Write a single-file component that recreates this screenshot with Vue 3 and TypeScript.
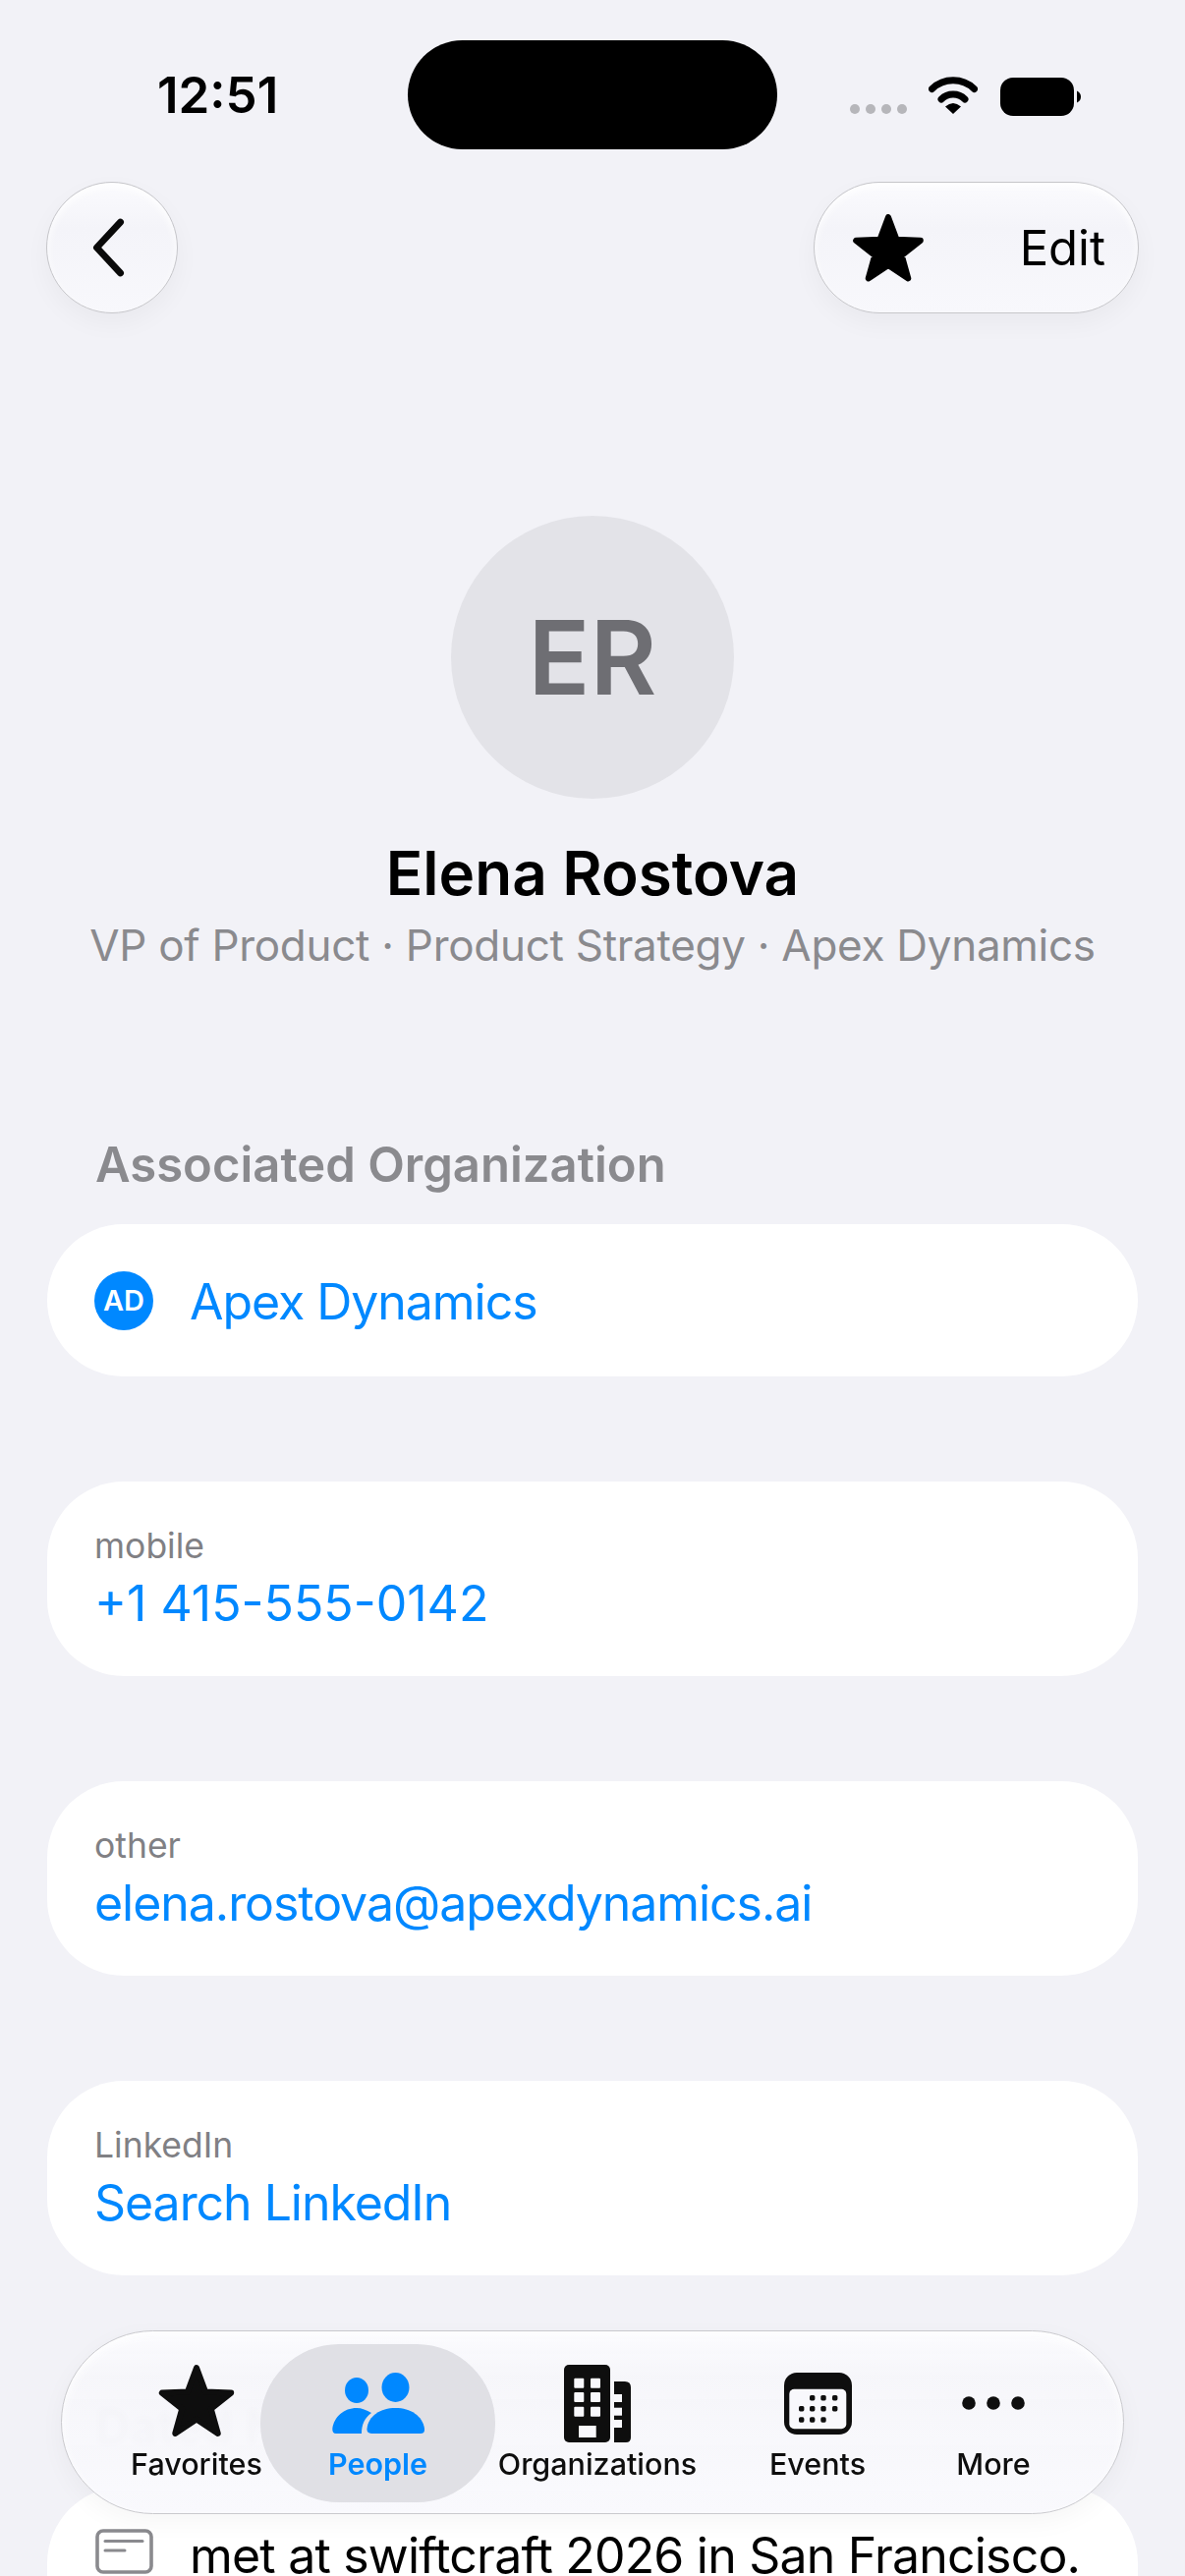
<script setup lang="ts">
interface ContactRow {
  label: string
  value: string
  numeric?: boolean
}

const rows: ContactRow[] = [
  { label: 'mobile', value: '+1 415-555-0142', numeric: true },
  { label: 'other', value: 'elena.rostova@apexdynamics.ai' },
  { label: 'LinkedIn', value: 'Search LinkedIn' },
]

// five-pointed star, stroked with a round join to soften the tips
function starPoints(cx: number, cy: number, outer: number, inner: number): string {
  const pts: string[] = []
  for (let i = 0; i < 10; i++) {
    const r = i % 2 === 0 ? outer : inner
    const a = ((i * 36 - 90) * Math.PI) / 180
    pts.push(`${(cx + r * Math.cos(a)).toFixed(2)},${(cy + r * Math.sin(a)).toFixed(2)}`)
  }
  return pts.join(' ')
}

const windowRows = [13.7, 28, 42.7]
const annexNotches = [30, 43.7, 56]

// calendar dots: [x, y]
const calendarDots: [number, number][] = [
  [28.7, 25.7], [40, 25.7], [51.7, 25.7],
  [17.7, 36.7], [28.7, 36.7], [40, 36.7], [51.7, 36.7],
  [17.7, 48], [28.7, 48], [40, 48],
]
</script>

<template>
  <div class="screen">
    <div class="status">
      <div class="time-slot"><span class="time">12:51</span></div>
      <div class="island"></div>
      <div class="status-icons">
        <svg class="dots" width="58" height="10" viewBox="0 0 58 10">
          <circle v-for="i in 4" :key="i" :cx="5 + (i - 1) * 16" cy="5" r="5" fill="#b6b6ba" />
        </svg>
        <svg class="wifi" width="50" height="38" viewBox="0 0 50 38" fill="none" stroke="#000" stroke-width="7" stroke-linecap="round">
          <path d="M3.5 12.5A31 31 0 0 1 46.5 12.5" />
          <path d="M13 23A17 17 0 0 1 37 23" />
          <path d="M25 38L17 30.5Q25 23.5 33 30.5Z" fill="#000" stroke="none" />
        </svg>
        <svg class="battery" width="82" height="39" viewBox="0 0 82 39">
          <rect width="75" height="39" rx="13" fill="#000" />
          <path d="M78 13.5C81 15 82 17 82 19.5S81 24 78 25.5Z" fill="#000" />
        </svg>
      </div>
    </div>

    <header class="toolbar">
      <button class="glass back">
        <svg width="40" height="64" viewBox="0 0 40 64" fill="none" stroke="#0a0a0a" stroke-width="7.5" stroke-linecap="round" stroke-linejoin="round">
          <path d="M33 4L7 32L33 60" />
        </svg>
      </button>
      <button class="glass edit">
        <svg width="72" height="69" viewBox="0 0 72 69">
          <polygon :points="starPoints(36, 37.5, 34.5, 14.5)" fill="#000" stroke="#000" stroke-width="6" stroke-linejoin="round" />
        </svg>
        <span>Edit</span>
      </button>
    </header>

    <section class="hero">
      <div class="avatar">ER</div>
      <h1 class="name">Elena Rostova</h1>
      <p class="role">VP of Product · Product Strategy · Apex Dynamics</p>
    </section>

    <h2 class="section-title">Associated Organization</h2>
    <div class="card org-card">
      <span class="org-badge">AD</span>
      <span class="link">Apex Dynamics</span>
    </div>

    <div v-for="row in rows" :key="row.label" class="card contact-card">
      <span class="contact-label">{{ row.label }}</span>
      <span class="link" :class="{ numeric: row.numeric }">{{ row.value }}</span>
    </div>

    <h2 class="section-title notes-title">Dated Notes</h2>
    <div class="card note-card">
      <svg class="note-icon" width="59" height="46" viewBox="0 0 59 46" fill="none" stroke="#8a8a8e" stroke-linecap="round">
        <rect x="2" y="2" width="55" height="42" rx="6" stroke-width="3.6" />
        <path d="M10 12.6H48" stroke-width="3" />
        <path d="M10 22H30" stroke-width="3" />
      </svg>
      <span class="note-text">met at swiftcraft 2026 in San Francisco.</span>
    </div>

    <nav class="tabbar">
      <div class="tab">
        <div class="tab-icon">
          <svg width="100" height="80" viewBox="0 0 100 80">
            <polygon :points="starPoints(50, 41, 37, 15.5)" fill="#0e0e0e" stroke="#0e0e0e" stroke-width="6" stroke-linejoin="round" />
          </svg>
        </div>
        <span class="tab-label">Favorites</span>
      </div>

      <div class="tab active">
        <div class="tab-icon">
          <svg width="94" height="62" viewBox="0 0 94 62" fill="#0088ff">
            <ellipse cx="25" cy="18" rx="12" ry="13" />
            <ellipse cx="64.5" cy="15" rx="14" ry="15" />
            <path d="M40 62H90Q94.5 62 94 57C92 44 80 36 64.5 36C49 36 37 44 35.5 57Q35 62 40 62Z" />
            <path d="M4 62H30C30 53 33 46 40 41C35 38 30 36 25 36C12 36 2 45 .3 57Q0 62 4 62Z" />
          </svg>
        </div>
        <span class="tab-label">People</span>
      </div>

      <div class="tab">
        <div class="tab-icon">
          <svg width="68" height="79" viewBox="0 0 68 79">
            <rect width="47" height="79" rx="5" fill="#0e0e0e" />
            <template v-for="y in windowRows" :key="y">
              <rect x="10.3" :y="y" width="10" height="10" rx="1" fill="#f8f8fc" />
              <rect x="27" :y="y" width="10" height="10" rx="1" fill="#f8f8fc" />
            </template>
            <rect x="15" y="62" width="17.7" height="12" fill="#f8f8fc" />
            <path d="M51 17H62Q68 17 68 23V74Q68 79 63 79H51Z" fill="#0e0e0e" />
            <rect v-for="y in annexNotches" :key="y" x="51" :y="y" width="8" height="8" fill="#f8f8fc" />
          </svg>
        </div>
        <span class="tab-label">Organizations</span>
      </div>

      <div class="tab">
        <div class="tab-icon">
          <svg width="69" height="63" viewBox="0 0 69 63">
            <rect width="69" height="63" rx="13" fill="#0e0e0e" />
            <rect x="5.3" y="16.7" width="58" height="40.6" rx="5" fill="#f8f8fc" />
            <rect
              v-for="[x, y] in calendarDots"
              :key="`${x}-${y}`"
              :x="x - 2.7"
              :y="y - 2.7"
              width="5.4"
              height="5.4"
              rx="1.6"
              fill="#0e0e0e"
            />
          </svg>
        </div>
        <span class="tab-label">Events</span>
      </div>

      <div class="tab">
        <div class="tab-icon">
          <svg width="64" height="14" viewBox="0 0 64 14" fill="#0e0e0e">
            <circle cx="7" cy="7" r="6.8" />
            <circle cx="32" cy="7" r="6.8" />
            <circle cx="57" cy="7" r="6.8" />
          </svg>
        </div>
        <span class="tab-label">More</span>
      </div>
    </nav>
  </div>
</template>

<style scoped>
.screen {
  position: relative;
  width: 1206px;
  height: 2622px;
  overflow: hidden;
  background: #f2f2f7;
  color: #000;
  font-family: Inter, "Liberation Sans", sans-serif;
}

.status {
  display: flex;
  align-items: center;
  height: 111px;
  padding-top: 41px;
}

.time-slot {
  width: 415px;
  padding-left: 160px;
  box-sizing: border-box;
}

.time {
  font-size: 51px;
  font-weight: 600;
  line-height: 60px;
}

.island {
  width: 376px;
  height: 111px;
  border-radius: 56px;
  background: #000;
}

.status-icons {
  position: relative;
  height: 111px;
  flex: 1;
}

.status-icons svg {
  position: absolute;
  display: block;
}

.dots { left: 74px; top: 65px; }
.wifi { left: 154px; top: 37px; }
.battery { left: 227px; top: 38px; }

.toolbar {
  display: flex;
  justify-content: space-between;
  margin-top: 33px;
  padding: 0 47px;
}

.glass {
  display: flex;
  align-items: center;
  height: 134px;
  box-sizing: border-box;
  padding: 0;
  border: 1.5px solid #c6c6ca;
  border-radius: 67px;
  background: linear-gradient(#fbfbfe 0%, #f4f4f9 35%, #f8f8fc 100%);
  box-shadow: inset 0 4px 8px rgba(255, 255, 255, 0.9), 0 10px 26px rgba(0, 0, 0, 0.04);
  color: #000;
  font-family: inherit;
}

.back {
  width: 134px;
  justify-content: flex-start;
  padding-left: 44px;
}

.back svg {
  width: 37px;
  height: 60px;
}

.edit {
  width: 331px;
  justify-content: space-between;
  padding: 0 33px 0 39px;
  font-size: 49px;
  font-weight: 400;
}

.hero {
  display: flex;
  flex-direction: column;
  align-items: center;
}

.avatar {
  display: flex;
  align-items: center;
  justify-content: center;
  width: 288px;
  height: 288px;
  margin-top: 206px;
  border-radius: 50%;
  background: #e3e3e8;
  color: #6e6e73;
  font-size: 104px;
  font-weight: 600;
}

.name {
  margin: 40px 0 0;
  font-size: 62px;
  font-weight: 600;
  line-height: 72px;
}

.role {
  margin: 9px 0 0;
  color: #8a8a8e;
  font-size: 44px;
  letter-spacing: -0.28px;
  line-height: 56px;
}

.section-title {
  margin: 167px 0 0 97px;
  color: #8a8a8e;
  font-size: 49px;
  font-weight: 600;
  line-height: 58px;
}

.notes-title {
  margin-top: 126px;
}

.card {
  margin: 107px 48px 0;
  background: #fff;
  border-radius: 78px;
}

.org-card {
  display: flex;
  align-items: center;
  gap: 37px;
  height: 155px;
  margin-top: 31px;
  padding-left: 48px;
}

.org-card .link {
  margin-top: 2px;
}

.org-badge {
  display: flex;
  align-items: center;
  justify-content: center;
  width: 60px;
  height: 60px;
  border-radius: 50%;
  background: #0088ff;
  color: #fff;
  font-size: 29px;
  font-weight: 600;
}

.link {
  color: #0088ff;
  font-size: 50px;
  letter-spacing: -1.05px;
  line-height: 60px;
}

.link.numeric {
  letter-spacing: 0;
}

.contact-card {
  display: flex;
  flex-direction: column;
  gap: 6px;
  height: 198px;
  box-sizing: border-box;
  padding: 44px 0 0 48px;
}

.contact-label {
  color: #808084;
  font-size: 35.5px;
  line-height: 44px;
}

.note-card {
  display: flex;
  align-items: flex-start;
  gap: 37px;
  height: 200px;
  margin-top: 31px;
  padding: 43px 0 0 49px;
}

.note-icon {
  flex: none;
}

.note-text {
  margin-top: -3px;
  font-size: 50px;
  letter-spacing: -0.8px;
  line-height: 60px;
  white-space: nowrap;
}

.tabbar {
  position: absolute;
  left: 62px;
  top: 2372px;
  display: grid;
  grid-template-columns: 130px 239px 208px 240px 118px;
  width: 1082px;
  height: 187px;
  box-sizing: border-box;
  padding: 13px 0 0 72px;
  border: 1.5px solid #c9c9cd;
  border-radius: 94px;
  background: linear-gradient(rgba(251, 251, 254, 0.98), rgba(246, 246, 250, 0.97) 25%, rgba(249, 249, 253, 0.98));
  backdrop-filter: blur(3px);
  box-shadow: inset 0 4px 8px rgba(255, 255, 255, 0.9), 0 8px 26px rgba(0, 0, 0, 0.04);
}

.tab {
  display: flex;
  flex-direction: column;
  align-items: center;
  height: 161px;
  border-radius: 80px;
  color: #0e0e0e;
}

.tab.active {
  background: #e0e0e5;
  color: #0088ff;
}

.tab-icon {
  display: flex;
  align-items: center;
  justify-content: center;
  height: 80px;
  margin-top: 20px;
}

.tab-label {
  margin-top: 4px;
  font-size: 30.5px;
  font-weight: 500;
  line-height: 36px;
  white-space: nowrap;
}

.tab.active .tab-label {
  font-weight: 600;
}
</style>
